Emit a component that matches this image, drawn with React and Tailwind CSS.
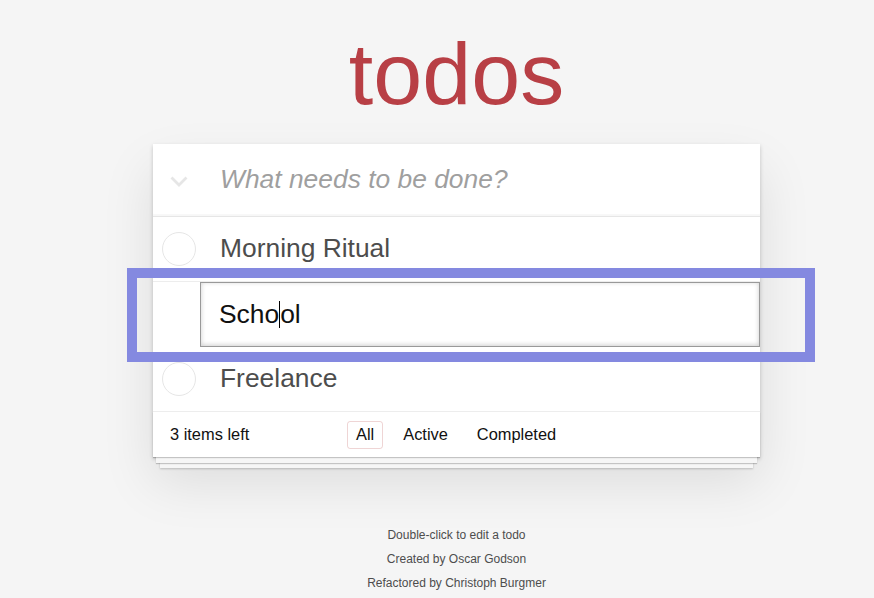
import React from "react";

export default function App() {
  return (
    <div
      className="relative min-h-screen w-full bg-[#f5f5f5] pt-[30px] text-[#4d4d4d]"
      style={{ fontFamily: '"Liberation Sans", Arial, sans-serif' }}
    >
      <div className="ml-[153px] w-[607px]">
        <h1 className="h-[88px] text-center text-[88px] leading-[88px] text-[#b83f45]">
          todos
        </h1>

        <div className="relative mt-[26px] bg-white shadow-[0_2px_4px_0_rgba(0,0,0,0.2),0_25px_50px_0_rgba(0,0,0,0.1)]">
          {/* header */}
          <div className="flex h-[73px] items-center border-b border-[#e6e6e6] shadow-[inset_0_-2px_1px_rgba(0,0,0,0.03)]">
            <div className="flex w-[67px] pl-[17px] pt-[3px]">
              <svg width="18" height="11" viewBox="0 0 18 11">
                <path
                  d="M1.5 1.5 L9 9 L16.5 1.5"
                  fill="none"
                  stroke="#e6e6e6"
                  strokeWidth="2.8"
                />
              </svg>
            </div>
            <div className="text-[26.4px] italic text-[#9f9f9f]">What needs to be done?</div>
          </div>

          {/* row 1 */}
          <div className="flex h-[65px] items-center border-b border-[#ededed]">
            <div className="flex w-[67px] pl-[9px]">
              <div className="h-[34px] w-[34px] rounded-full border border-[#e6e6e6]" />
            </div>
            <div className="text-[26.4px] text-[#4d4d4d]">Morning Ritual</div>
          </div>

          {/* editing row */}
          <div className="flex h-[65px] items-stretch">
            <div className="ml-[47px] flex flex-1 items-center border border-[#999] pl-[18px] text-[26.4px] text-[#111] shadow-[inset_0_-1px_5px_0_rgba(0,0,0,0.2)]">
              <span>Scho</span>
              <span className="inline-block h-[27px] w-px bg-black" />
              <span>ol</span>
            </div>
          </div>

          {/* row 3 */}
          <div className="flex h-[65px] items-center border-b border-[#ededed]">
            <div className="flex w-[67px] pl-[9px]">
              <div className="h-[34px] w-[34px] rounded-full border border-[#e6e6e6]" />
            </div>
            <div className="text-[26.4px] text-[#4d4d4d]">Freelance</div>
          </div>

          {/* footer */}
          <div className="relative flex h-[45px] items-center text-[16.4px] text-[#111]">
            <div className="pointer-events-none absolute inset-0 shadow-[0_1px_1px_rgba(0,0,0,0.2),0_9px_0_-3px_#f6f6f6,0_10px_1px_-3px_rgba(0,0,0,0.2),0_18px_0_-7px_#f6f6f6,0_19px_2px_-7px_rgba(0,0,0,0.2)]" />
            <div className="relative w-[194px] pl-[17px]">3 items left</div>
            <div className="relative flex items-center gap-[11px]">
              <div className="flex h-[28px] items-center rounded-[3px] border border-[rgba(175,47,47,0.2)] px-[8px]">
                All
              </div>
              <div className="flex h-[28px] items-center rounded-[3px] border border-transparent px-[8px]">
                Active
              </div>
              <div className="flex h-[28px] items-center rounded-[3px] border border-transparent px-[8px]">
                Completed
              </div>
            </div>
          </div>
        </div>

        <div className="mt-[66px] text-center text-[12px] text-[#4d4d4d]">
          <p className="leading-[24px]">Double-click to edit a todo</p>
          <p className="leading-[24px]">Created by Oscar Godson</p>
          <p className="leading-[24px]">Refactored by Christoph Burgmer</p>
        </div>
      </div>

      {/* highlight overlay */}
      <div className="pointer-events-none absolute left-[127px] top-[268px] h-[94px] w-[688px] border-[10px] border-[#8489e0]" />
    </div>
  );
}
